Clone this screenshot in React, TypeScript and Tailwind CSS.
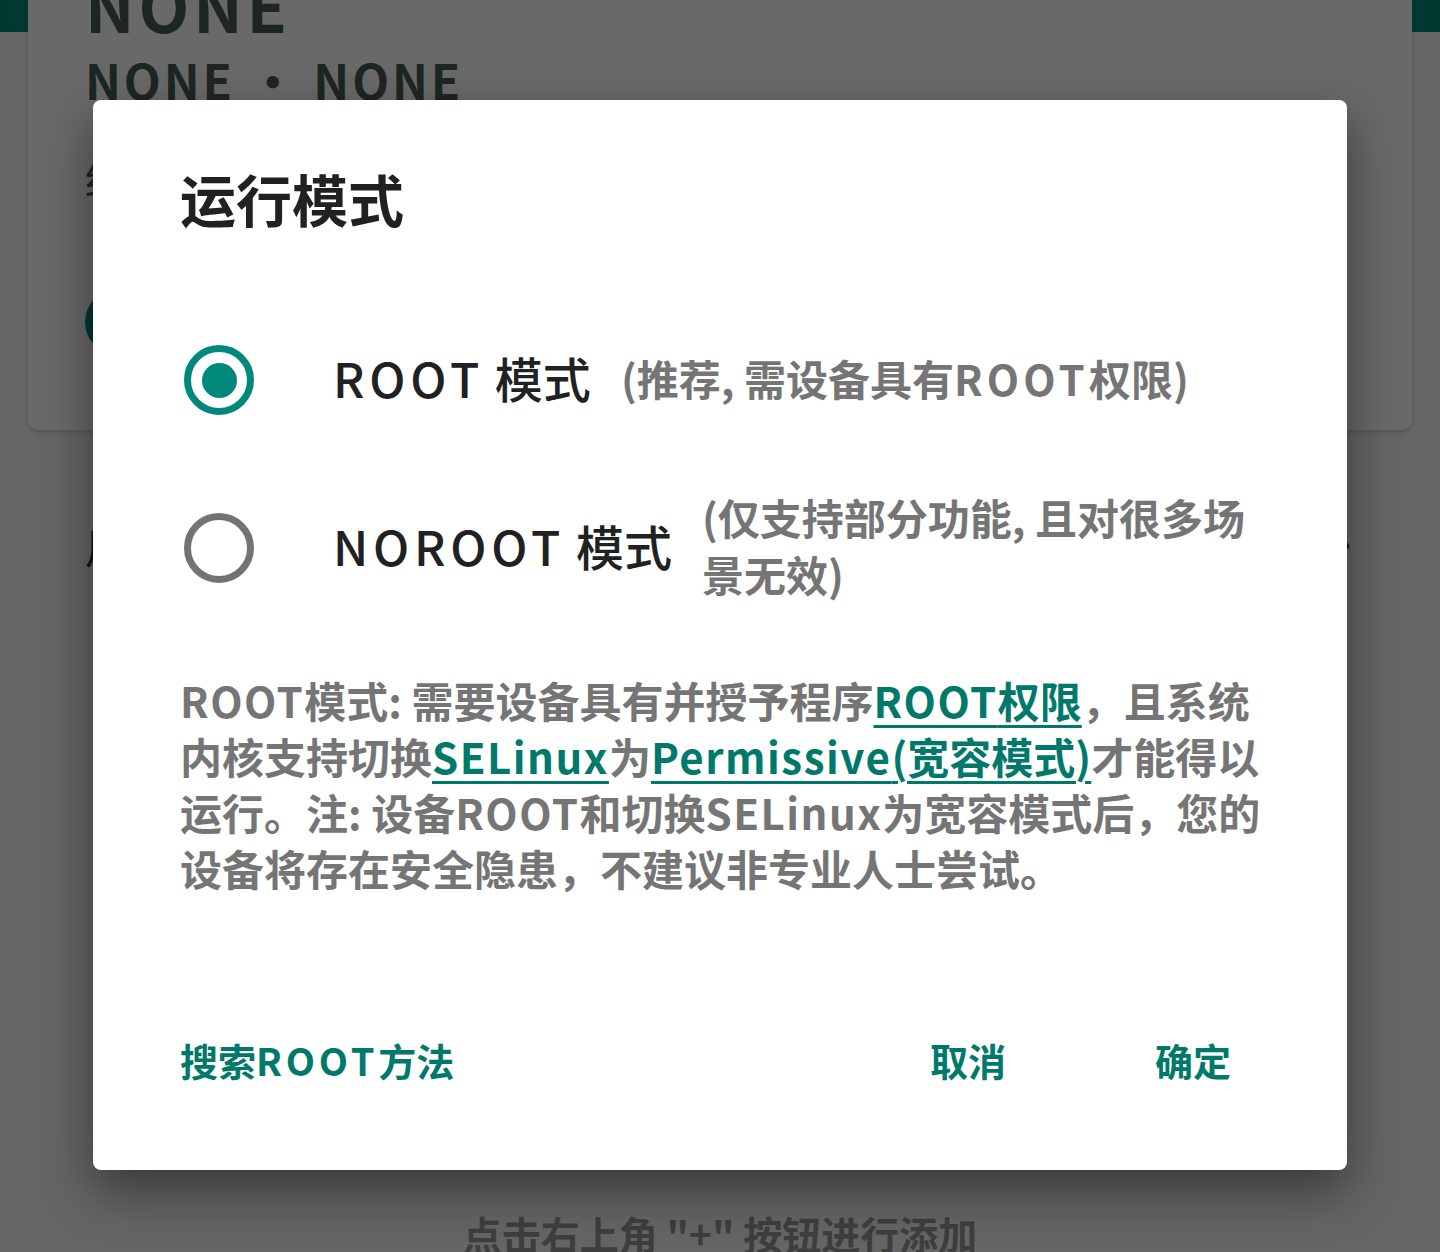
import { ChevronRight } from "lucide-react";

const font = "font-['Noto_Sans_CJK_SC','Noto_Sans',sans-serif]";

// the Latin in the original UI font is wider than Noto's; widen it a little
const W: React.FC<{ children: React.ReactNode }> = ({ children }) => (
  <span className="tracking-[0.1em]">{children}</span>
);

const Radio: React.FC<{ checked: boolean }> = ({ checked }) => (
  <div
    className={`ml-[4px] w-[70px] h-[70px] shrink-0 rounded-full border-[7px] flex items-center justify-center ${
      checked ? "border-[#00897b]" : "border-[#737373]"
    }`}
  >
    {checked && <div className="w-[35px] h-[35px] rounded-full bg-[#00897b]" />}
  </div>
);

const Link: React.FC<{ children: React.ReactNode }> = ({ children }) => (
  <span className="text-[#00796b] underline decoration-[3px] underline-offset-[7px]">{children}</span>
);

const App: React.FC = () => {
  return (
    <div className={`relative h-[1252px] overflow-hidden bg-[#f5f5f5] flex flex-col ${font}`}>
      {/* app behind the dialog */}
      <div className="h-[32px] shrink-0 bg-[#00897b]" />
      <div className="-mt-[68px] mx-[28px] h-[466px] rounded-[10px] bg-white shadow-md px-[57px]">
        <div className="text-[66px] leading-[80px] font-bold text-[#495d58] tracking-[0.06em]">NONE</div>
        <div className="mt-[5px] text-[48px] leading-[60px] font-bold text-[#495d58] tracking-[0.06em]">NONE • NONE</div>
        <div className="mt-[40px] text-[42px] leading-[56px] text-[#495d58]">终端类型</div>
        <div className="mt-[84px] w-[66px] h-[66px] rounded-full bg-[#00897b]" />
      </div>
      <div className="mt-[88px] ml-[85px] mr-[78px] flex items-center justify-between text-[42px] leading-[56px] text-[#2a2a2a]">
        <span>用户列表</span>
        <ChevronRight className="w-[40px] h-[40px] text-[#3a3a3a]" strokeWidth={3} />
      </div>
      <div className="flex-1" />
      <div className="text-center text-[39px] leading-[40px] font-bold text-[#969696] translate-y-[1px]">
        点击右上角 "+" 按钮进行添加
      </div>

      {/* dim + dialog */}
      <div className="absolute inset-0 bg-black/[0.59] flex justify-center items-start pt-[100px]">
        <div className="w-[1254px] h-[1070px] rounded-[8px] bg-white shadow-[0_20px_50px_rgba(0,0,0,0.45)] pl-[87px] pr-[87px] flex flex-col">
          <h2 className="pt-[59px] text-[56px] leading-[78px] font-bold text-[#212121]">运行模式</h2>

          <div className="mt-[83px] h-[120px] flex items-center">
            <Radio checked />
            <span className="ml-[79px] -translate-y-[3px] text-[48px] leading-none font-medium text-[#212121] whitespace-nowrap">
              <W>ROOT</W> 模式
            </span>
            <span className="ml-[30px] -translate-y-[3px] text-[42px] leading-[57px] font-bold text-[#757575] whitespace-nowrap">
              (推荐, 需设备具有<W>ROOT</W>权限)
            </span>
          </div>

          <div className="mt-[48px] h-[120px] flex items-center">
            <Radio checked={false} />
            <span className="ml-[79px] -translate-y-[3px] text-[48px] leading-none font-medium text-[#212121] whitespace-nowrap">
              <W>NOROOT</W> 模式
            </span>
            <span className="ml-[30px] -translate-y-[3px] text-[42px] leading-[57px] font-bold text-[#757575] whitespace-nowrap">
              (仅支持部分功能, 且对很多场
              <br />
              景无效)
            </span>
          </div>

          <p className="mt-[64px] text-[42px] leading-[56px] font-bold text-[#757575] whitespace-nowrap">
            <span className="tracking-[1.5px]">ROOT</span>模式: 需要设备具有并授予程序
            <Link>
              <span className="tracking-[1.5px]">ROOT</span>权限
            </Link>
            ，且系统
            <br />
            内核支持切换
            <Link>
              <span className="tracking-[1.5px]">SELinux</span>
            </Link>
            为
            <Link>
              <span className="tracking-[1.5px]">Permissive</span>(宽容模式)
            </Link>
            才能得以
            <br />
            运行。注: 设备<span className="tracking-[1.5px]">ROOT</span>和切换
            <span className="tracking-[1.5px]">SELinux</span>为宽容模式后，您的
            <br />
            设备将存在安全隐患，不建议非专业人士尝试。
          </p>

          <div className="mt-[123px] h-[80px] flex items-center text-[38px] font-bold text-[#00796b]">
            <button className="whitespace-nowrap">
              搜索<W>ROOT</W>方法
            </button>
            <div className="flex-1" />
            <button className="whitespace-nowrap">取消</button>
            <button className="ml-[149px] mr-[29px] whitespace-nowrap">确定</button>
          </div>
        </div>
      </div>
    </div>
  );
};

export default App;
